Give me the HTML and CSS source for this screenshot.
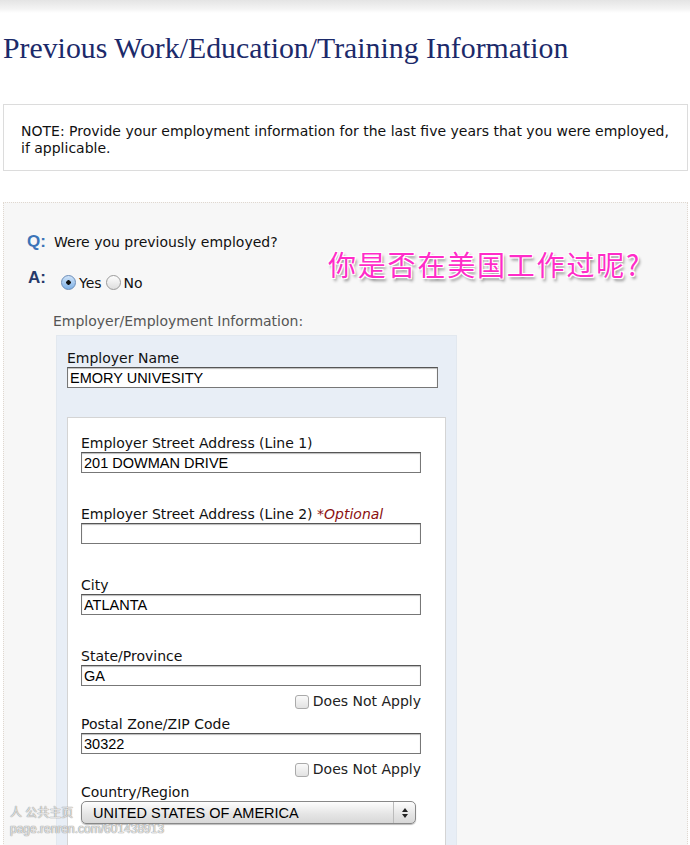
FILE: index.html
```html
<!DOCTYPE html>
<html lang="en">

<head>
    <meta charset="UTF-8">
    <title>Previous Work/Education/Training Information</title>
    <link rel="stylesheet" href="styles.css">
</head>

<body>
    <div class="top_band"></div>

    <h1 class="page_title">Previous Work/Education/Training Information</h1>

    <div class="note">
        NOTE: Provide your employment information for the last five years that you were employed, if applicable.
    </div>

    <div class="panel">
        <div class="qa">
            <div class="qa_row">
                <span class="q_mark">Q:</span>
                <span class="q_text">Were you previously employed?</span>
            </div>
            <div class="qa_row a_row">
                <span class="a_mark">A:</span>
                <label class="radio_item"><input type="radio" name="employed" checked> Yes</label>
                <label class="radio_item"><input type="radio" name="employed"> No</label>
            </div>
            <div class="annotation">你是否在美国工作过呢?</div>
        </div>

        <div class="section_title">Employer/Employment Information:</div>

        <div class="blue_box">
            <div class="field">
                <label for="empName">Employer Name</label>
                <input type="text" id="empName" class="wide_input" value="EMORY UNIVESITY">
            </div>

            <div class="white_box">
                <div class="field">
                    <label for="street1">Employer Street Address (Line 1)</label>
                    <input type="text" id="street1" value="201 DOWMAN DRIVE">
                </div>

                <div class="field">
                    <label for="street2">Employer Street Address (Line 2) <em class="optional">*Optional</em></label>
                    <input type="text" id="street2" value="">
                </div>

                <div class="field">
                    <label for="city">City</label>
                    <input type="text" id="city" value="ATLANTA">
                </div>

                <div class="field field_tight">
                    <label for="state">State/Province</label>
                    <input type="text" id="state" value="GA">
                    <div class="dna"><label><input type="checkbox"> Does Not Apply</label></div>
                </div>

                <div class="field field_tight">
                    <label for="zip">Postal Zone/ZIP Code</label>
                    <input type="text" id="zip" value="30322">
                    <div class="dna"><label><input type="checkbox"> Does Not Apply</label></div>
                </div>

                <div class="field">
                    <label for="country">Country/Region</label>
                    <div class="select_box">
                        <span class="select_value">UNITED STATES OF AMERICA</span>
                        <span class="select_arrows">
                            <svg width="8" height="12" viewBox="0 0 8 12">
                                <path d="M4 1 L7 5 L1 5 Z" fill="#222" />
                                <path d="M4 11 L7 7 L1 7 Z" fill="#222" />
                            </svg>
                        </span>
                    </div>
                </div>
            </div>
        </div>
    </div>

    <div class="watermark">
        <div>&#x4EBA; 公共主页</div>
        <div>page.renren.com/601438913</div>
    </div>
</body>

</html>
```

FILE: styles.css
```css
body {
    margin: 0;
    background-color: white;
    font-family: "DejaVu Sans", Verdana, sans-serif;
    font-size: 14px;
    color: #111;
    width: 690px;
    height: 845px;
    overflow: hidden;
    position: relative;
}

.top_band {
    height: 13px;
    background: linear-gradient(#e4e4e4, #f4f4f4 70%, white);
}

.page_title {
    margin: 18px 0 0 3px;
    font-family: "Liberation Serif", "Times New Roman", serif;
    font-weight: normal;
    font-size: 29.8px;
    line-height: 34px;
    color: #1c2a6a;
}

.note {
    margin: 39px 2px 0 3px;
    border: 1px solid #dcdcdc;
    padding: 18px 18px 13px 17px;
    line-height: 17px;
    font-size: 14px;
}

.panel {
    margin: 31px 2px 0 3px;
    border: 1px dotted #e0d8d0;
    background-color: #f7f7f7;
    padding: 28px 0 0 0;
    height: 700px;
}

.qa {
    position: relative;
    padding-left: 23px;
}

.qa_row {
    display: flex;
    align-items: center;
    height: 22px;
}

.q_mark {
    font-family: "Liberation Sans", Arial, sans-serif;
    font-weight: bold;
    font-size: 17px;
    color: #3c74b8;
    width: 27px;
}

.a_row {
    margin-top: 18px;
}

.a_mark {
    font-family: "Liberation Sans", Arial, sans-serif;
    font-weight: bold;
    font-size: 17px;
    color: #27396a;
    width: 33px;
    align-self: flex-start;
    margin-top: -3px;
    padding-left: 1px;
}

.radio_item {
    display: flex;
    align-items: center;
    gap: 3px;
    margin-right: 4px;
    margin-top: 1px;
}

.radio_item input {
    appearance: none;
    width: 15px;
    height: 15px;
    margin: 0;
    border: 1px solid #9a9a9a;
    border-radius: 50%;
    background: linear-gradient(#fdfdfd, #dedede);
}

.radio_item input:checked {
    border-color: #6a8cb8;
    background: radial-gradient(circle, #111 0 2px, transparent 2.5px), linear-gradient(#cfe3f8, #7fb1e6);
}

.annotation {
    position: absolute;
    left: 324px;
    top: 16px;
    font-family: "Noto Sans CJK SC", sans-serif;
    font-size: 28px;
    line-height: 34px;
    letter-spacing: 1.8px;
    color: #ff2cc8;
    text-shadow: 1px 1px 0 white, -1px -1px 0 white, 1px -1px 0 white, -1px 1px 0 white, 2px 3px 3px #888;
}

.section_title {
    margin: 20px 0 0 49px;
    color: #555;
}

.blue_box {
    margin: 6px 0 0 52px;
    width: 389px;
    background-color: #e8eef6;
    border: 1px solid #e2e8ef;
    padding: 14px 0 0 10px;
    height: 600px;
}

.field {
    display: flex;
    flex-direction: column;
}

.field label {
    line-height: 17px;
}

.field input[type="text"] {
    width: 340px;
    height: 21px;
    box-sizing: border-box;
    margin: 0;
    border: 1px solid #777;
    border-top-color: #555;
    box-shadow: inset 0 1px 1px #bbb;
    padding: 0 2px;
    font-family: "Liberation Sans", Arial, sans-serif;
    font-size: 14.5px;
    color: #000;
    background: white;
}

.field input.wide_input {
    width: 371px;
}

.white_box {
    margin-top: 29px;
    width: 379px;
    box-sizing: border-box;
    background-color: white;
    border: 1px solid #d4d4d4;
    padding: 17px 0 0 13px;
    height: 500px;
}

.white_box .field {
    margin-bottom: 33px;
}

.white_box .field_tight {
    margin-bottom: 0;
}

.optional {
    color: #8b1010;
}

.dna {
    display: flex;
    justify-content: flex-end;
    width: 340px;
    height: 30px;
    align-items: center;
    padding-top: 1px;
    box-sizing: border-box;
    color: #222;
}

.dna label {
    display: flex;
    align-items: center;
    gap: 4px;
}

.dna input {
    appearance: none;
    width: 14px;
    height: 14px;
    margin: 0;
    border: 1px solid #aaa;
    border-radius: 3px;
    background: linear-gradient(#fafafa, #e2e2e2);
}

.select_box {
    display: flex;
    width: 335px;
    height: 23px;
    box-sizing: border-box;
    border: 1px solid #888;
    border-radius: 5px;
    background: linear-gradient(#fdfdfd, #e4e4e4 60%, #d8d8d8);
    box-shadow: 0 1px 1px #bbb;
    align-items: center;
}

.select_value {
    flex: 1;
    padding-left: 11px;
    font-family: "Liberation Sans", Arial, sans-serif;
    font-size: 14.5px;
    color: #000;
}

.select_arrows {
    width: 21px;
    height: 100%;
    border-left: 1px solid #bbb;
    display: flex;
    align-items: center;
    justify-content: center;
}

.watermark {
    position: absolute;
    left: 10px;
    top: 805px;
    font-family: "Liberation Sans", "Noto Sans CJK SC", sans-serif;
    font-size: 12px;
    line-height: 16px;
    color: rgba(255, 255, 255, 0.75);
    text-shadow: 0 0 1px #888, 0 0 1px #888;
}
```
